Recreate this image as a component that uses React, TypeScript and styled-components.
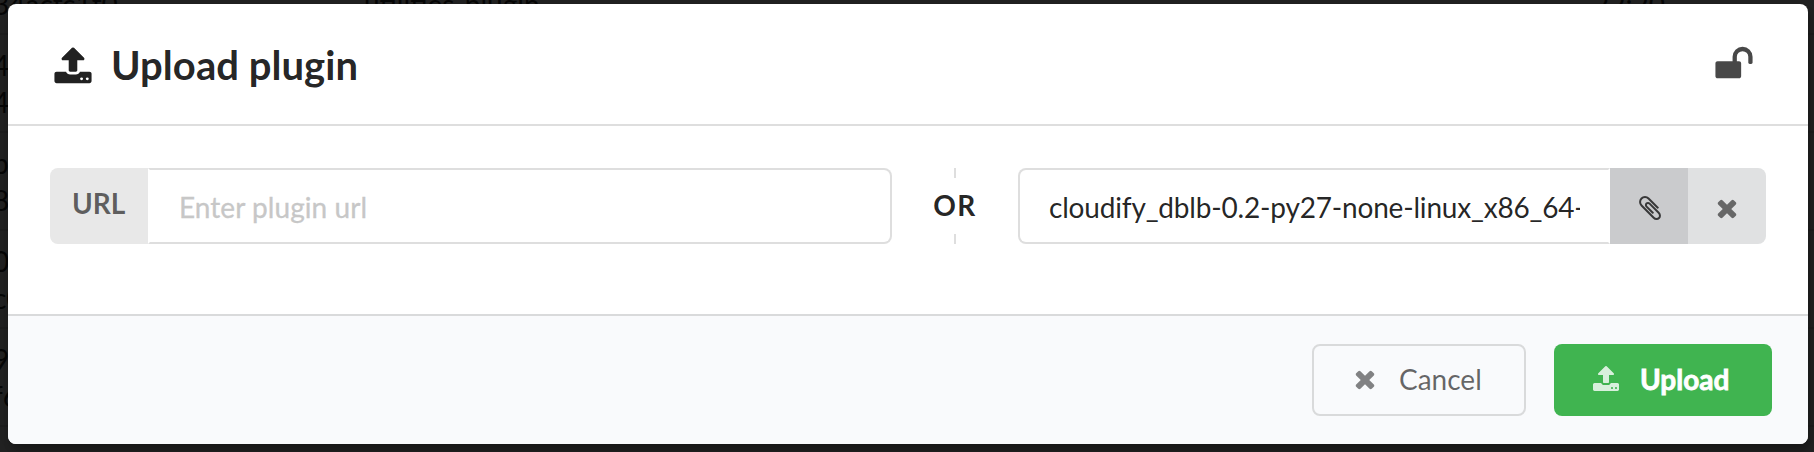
import React from "react";
import styled, { createGlobalStyle } from "styled-components";

const GlobalStyle = createGlobalStyle`
  *, *::before, *::after { box-sizing: border-box; }
  body {
    margin: 0;
    overflow: hidden;
    background: #232323;
    font-family: Lato, "Liberation Sans", sans-serif;
    font-size: 28px;
  }
  input, button { font-family: inherit; font-size: 28px; margin: 0; outline: none; }
`;

const ICONS = {
  upload:
    "M1344 1472q0-26-19-45t-45-19-45 19-19 45 19 45 45 19 45-19 19-45zm256 0q0-26-19-45t-45-19-45 19-19 45 19 45 45 19 45-19 19-45zm128-224v320q0 40-28 68t-68 28h-1472q-40 0-68-28t-28-68v-320q0-40 28-68t68-28h427q21 56 70.5 92t110.5 36h256q61 0 110.5-36t70.5-92h427q40 0 68 28t28 68zm-325-648q-17 40-59 40h-256v448q0 26-19 45t-45 19h-256q-26 0-45-19t-19-45v-448h-256q-42 0-59-40-17-39 14-69l448-448q18-19 45-19t45 19l448 448q31 30 14 69z",
  unlock:
    "M1728 576v256q0 26-19 45t-45 19h-64q-26 0-45-19t-19-45v-256q0-106-75-181t-181-75-181 75-75 181v192h96q40 0 68 28t28 68v576q0 40-28 68t-68 28h-960q-40 0-68-28t-28-68v-576q0-40 28-68t68-28h672v-192q0-185 131.5-316.5t316.5-131.5 316.5 131.5 131.5 316.5z",
  remove:
    "M1490 1322q0 40-28 68l-136 136q-28 28-68 28t-68-28l-294-294-294 294q-28 28-68 28t-68-28l-136-136q-28-28-28-68t28-68l294-294-294-294q-28-28-28-68t28-68l136-136q28-28 68-28t68 28l294 294 294-294q28-28 68-28t68 28l136 136q28 28 28 68t-28 68l-294 294 294 294q28 28 28 68z",
  attach:
    "M1596 1385q0 117-79 196t-196 79q-135 0-235-100l-777-776q-113-115-113-271 0-159 110-270t269-111q158 0 273 113l605 606q10 10 10 22 0 16-30.5 46.5t-46.5 30.5q-13 0-23-10l-606-607q-79-77-181-77-106 0-179 75t-73 181q0 105 76 181l776 777q63 63 145 63 64 0 106-42t42-106q0-82-63-145l-581-581q-26-24-60-24-29 0-48 19t-19 48q0 32 25 59l410 410q10 10 10 22 0 16-31 47t-47 31q-12 0-22-10l-410-410q-63-61-63-149 0-82 57-139t139-57q88 0 149 63l581 581q100 98 100 235z",
};

const Svg = styled.svg<{ $size: number; $opacity?: number }>`
  display: block;
  flex: none;
  width: ${(p) => p.$size}px;
  height: ${(p) => p.$size}px;
  fill: currentColor;
  opacity: ${(p) => p.$opacity ?? 1};
`;

function Icon({ name, size = 28, opacity }: { name: keyof typeof ICONS; size?: number; opacity?: number }) {
  return (
    <Svg $size={size} $opacity={opacity} viewBox="0 0 1792 1792" aria-hidden="true">
      <path d={ICONS[name]} />
    </Svg>
  );
}

const Page = styled.div`
  position: relative;
  height: 452px;
  padding: 4px 6px 8px 8px;
  overflow: hidden;
`;

const Backdrop = styled.div`
  position: absolute;
  inset: -63px 0 0 -7px;
  color: #060606;
  line-height: 37px;
`;

const BackRow = styled.div`
  display: grid;
  grid-template-columns: 371px 1229px 1fr;
  height: 98px;
  padding-top: 12px;
  border-bottom: 2px solid #1f1f1f;
  white-space: nowrap;
`;

const BackCell = styled.div<{ $low?: boolean }>`
  padding-top: ${(p) => (p.$low ? 37 : 0)}px;
`;

const Modal = styled.section`
  position: relative;
  display: flex;
  flex-direction: column;
  height: 440px;
  border-radius: 8px;
  overflow: hidden;
  background: #fff;
  color: rgba(0, 0, 0, 0.87);
  box-shadow: 2px 6px 6px rgba(0, 0, 0, 0.2), 2px 6px 30px 4px rgba(0, 0, 0, 0.2);
`;

const Header = styled.header`
  display: flex;
  align-items: center;
  height: 122px;
  padding: 0 54px 0 45px;
  border-bottom: 2px solid #dedede;
`;

const Heading = styled.div`
  display: flex;
  flex: 1;
  align-items: center;
  gap: 18px;
  padding-top: 3px;
`;

const Title = styled.h1`
  margin: 0;
  padding-bottom: 2px;
  font-size: 40px;
  line-height: 50px;
  font-weight: 700;
  letter-spacing: 0.05px;
`;

const LockSlot = styled.div`
  opacity: 0.82;
`;

const Body = styled.form`
  display: flex;
  align-items: flex-start;
  height: 188px;
  padding: 42px 42px 0;
`;

const Field = styled.div<{ $width: number }>`
  display: flex;
  width: ${(p) => p.$width}px;
  height: 76px;
`;

const UrlLabel = styled.label`
  width: 98px;
  padding: 18px 0 0 22px;
  border-radius: 8px 0 0 8px;
  background: #e8e8e8;
  color: rgba(0, 0, 0, 0.6);
  font-weight: 700;
  line-height: 34px;
`;

const TextInput = styled.input<{ $side: "left" | "right" }>`
  flex: 1;
  min-width: 0;
  height: 76px;
  padding: 2px 28px 0 29px;
  border: 2px solid #dedede;
  border-radius: ${(p) => (p.$side === "right" ? "0 8px 8px 0" : "8px 0 0 8px")};
  border-${(p) => (p.$side === "right" ? "left" : "right")}-color: transparent;
  background: #fff;
  color: rgba(0, 0, 0, 0.87);
  letter-spacing: ${(p) => (p.$side === "right" ? "0.06px" : "-0.18px")};
  &::placeholder {
    color: #c7c7c7;
    opacity: 1;
    -webkit-text-stroke: 0.3px #c7c7c7;
  }
`;

const Divider = styled.div`
  display: flex;
  flex-direction: column;
  align-items: center;
  width: 126px;
  height: 76px;
  font-weight: 700;
  letter-spacing: 1.4px;
  &::before, &::after {
    content: "";
    width: 2px;
    height: 10px;
    background: #dedede;
  }
`;

const DividerText = styled.span`
  height: 56px;
  line-height: 54px;
`;

const IconButton = styled.button<{ $dark?: boolean }>`
  display: flex;
  align-items: center;
  justify-content: center;
  width: 78px;
  height: 76px;
  padding: ${(p) => (p.$dark ? "4px 0 0 1px" : "4px 1px 0 0")};
  border: 0;
  border-radius: ${(p) => (p.$dark ? "0" : "0 8px 8px 0")};
  background: ${(p) => (p.$dark ? "#cacbcd" : "#e0e1e2")};
  color: ${(p) => (p.$dark ? "rgba(0,0,0,.8)" : "rgba(0,0,0,.6)")};
`;

const Footer = styled.footer`
  display: flex;
  justify-content: flex-end;
  gap: 28px;
  height: 130px;
  padding: 28px 36px 0;
  border-top: 2px solid #d9dadb;
  background: #f9fafc;
`;

const Action = styled.button<{ $primary?: boolean }>`
  display: flex;
  align-items: center;
  width: ${(p) => (p.$primary ? 218 : 214)}px;
  height: 72px;
  padding: 0 0 2px ${(p) => (p.$primary ? 38 : 37)}px;
  gap: 20px;
  border: ${(p) => (p.$primary ? "0" : "2px solid #d9dadb")};
  border-radius: 8px;
  background: ${(p) => (p.$primary ? "#40b450" : "transparent")};
  color: ${(p) => (p.$primary ? "#fff" : "rgba(0,0,0,.6)")};
  font-weight: ${(p) => (p.$primary ? 700 : 400)};
  -webkit-text-stroke: ${(p) => (p.$primary ? "0.8px #fff" : "0")};
`;

const ROWS = [
  { id: ["", "34acfc1f0"], name: "utilities-plugin", date: "22:20" },
  { id: ["4", "4c"] },
  { id: ["b", "8"] },
  { id: ["0", "c0"] },
  { id: ["9b", "f6"] },
];

export default function App() {
  return (
    <Page>
      <GlobalStyle />
      <Backdrop aria-hidden="true">
        {ROWS.map((row, i) => (
          <BackRow key={i}>
            <BackCell>
              <div>{row.id[0] || "\u00a0"}</div>
              <div>{row.id[1]}</div>
            </BackCell>
            <BackCell $low>{row.name}</BackCell>
            <BackCell $low>{row.date}</BackCell>
          </BackRow>
        ))}
      </Backdrop>
      <Modal>
        <Header>
          <Heading>
            <Icon name="upload" size={40} />
            <Title>Upload plugin</Title>
          </Heading>
          <LockSlot>
            <Icon name="unlock" size={40} />
          </LockSlot>
        </Header>
        <Body>
          <Field $width={842}>
            <UrlLabel>URL</UrlLabel>
            <TextInput $side="right" placeholder="Enter plugin url" />
          </Field>
          <Divider>
            <DividerText>OR</DividerText>
          </Divider>
          <Field $width={748}>
            <TextInput $side="left" readOnly value="cloudify_dblb-0.2-py27-none-linux_x86_64-" />
            <IconButton type="button" $dark>
              <Icon name="attach" opacity={0.9} />
            </IconButton>
            <IconButton type="button">
              <Icon name="remove" opacity={0.9} />
            </IconButton>
          </Field>
        </Body>
        <Footer>
          <Action type="button">
            <Icon name="remove" opacity={0.8} />
            Cancel
          </Action>
          <Action type="button" $primary>
            <Icon name="upload" opacity={0.8} />
            Upload
          </Action>
        </Footer>
      </Modal>
    </Page>
  );
}
